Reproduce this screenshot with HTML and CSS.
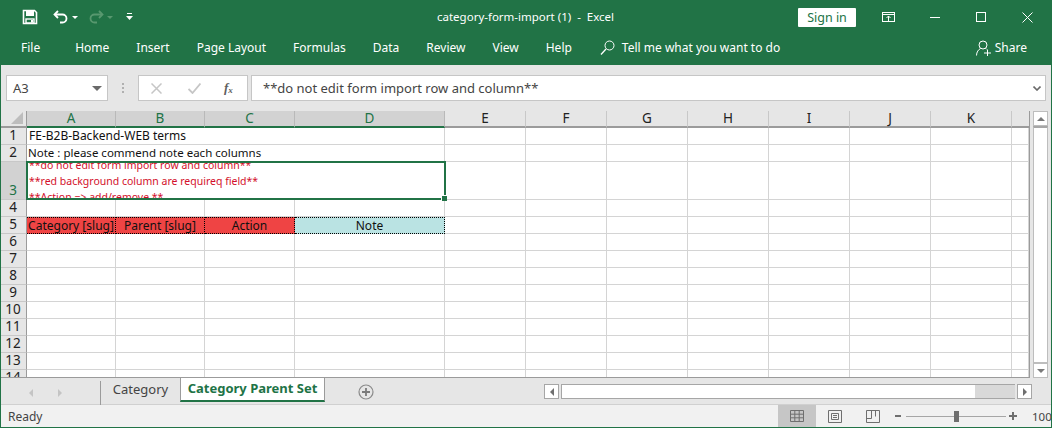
FILE: index.html
```html
<!DOCTYPE html>
<html lang="en">
<head>
<meta charset="utf-8">
<title>category-form-import (1) - Excel</title>
<link rel="stylesheet" href="styles.css">
</head>
<body>
<div class="app">
  <header class="titlebar">
    <div class="qat">
      <svg class="qat-save" width="16" height="16" viewBox="0 0 16 16"><path d="M1.5 1.5h11l2 2v11h-13z" fill="none" stroke="#fff" stroke-width="1.6"/><rect x="4" y="2" width="8" height="5" fill="#fff"/><rect x="4" y="10" width="8" height="4" fill="none" stroke="#fff" stroke-width="1.4"/><rect x="9" y="11" width="2" height="2.5" fill="#fff"/></svg>
      <svg class="qat-undo" width="16" height="14" viewBox="0 0 16 14"><path d="M5 1L1.5 4.5 5 8" fill="none" stroke="#fff" stroke-width="1.8"/><path d="M2 4.5h7.5a4 4 0 0 1 0 8H7" fill="none" stroke="#fff" stroke-width="1.8"/></svg>
      <span class="caret caret-white"></span>
      <svg class="qat-redo" width="16" height="14" viewBox="0 0 16 14"><path d="M11 1l3.500 3.500L11 8" fill="none" stroke="#58986f" stroke-width="1.800"/><path d="M14 4.500H6.500a4 4 0 0 0 0 8H9" fill="none" stroke="#58986f" stroke-width="1.800"/></svg>
      <span class="caret caret-dim"></span>
      <svg class="qat-more" width="7" height="8" viewBox="0 0 7 8"><rect x="1" y="0" width="5" height="1" fill="#fff"/><path d="M0 3h7L3.500 7z" fill="#fff"/></svg>
    </div>
    <div class="doc-title">category-form-import (1)&nbsp; -&nbsp; Excel</div>
    <div class="win">
      <button class="signin">Sign in</button>
      <svg class="win-ribbon" width="13" height="10" viewBox="0 0 13 10"><rect x=".5" y=".5" width="12" height="9" fill="none" stroke="#fff"/><path d="M.5 2.500h12" stroke="#fff"/><path d="M6.500 9V4M4.500 6l2-2 2 2" fill="none" stroke="#fff"/></svg>
      <svg class="win-min" width="10" height="1" viewBox="0 0 10 1"><rect width="10" height="1" fill="#fff"/></svg>
      <svg class="win-max" width="10" height="10" viewBox="0 0 10 10"><rect x=".5" y=".5" width="9" height="9" fill="none" stroke="#fff"/></svg>
      <svg class="win-close" width="11" height="11" viewBox="0 0 11 11"><path d="M.5.500l10 10M10.500.500l-10 10" stroke="#fff" fill="none"/></svg>
    </div>
  </header>
  <nav class="ribbon">
    <span class="rtab rtab-file">File</span>
    <span class="rtab">Home</span>
    <span class="rtab">Insert</span>
    <span class="rtab">Page Layout</span>
    <span class="rtab">Formulas</span>
    <span class="rtab">Data</span>
    <span class="rtab">Review</span>
    <span class="rtab">View</span>
    <span class="rtab">Help</span>
    <span class="tell">
      <svg width="15" height="16" viewBox="0 0 15 16"><circle cx="9.500" cy="5.500" r="4.500" fill="none" stroke="#fff"/><path d="M6 9l-5 5.500" stroke="#fff" stroke-width="1.300"/></svg>
      Tell me what you want to do
    </span>
    <span class="share">
      <svg width="16" height="16" viewBox="0 0 16 16"><circle cx="7" cy="5" r="4" fill="none" stroke="#fff"/><path d="M.5 15.500c0-3.500 2-6 4-7M9.500 8.500l1 .5" fill="none" stroke="#fff"/><path d="M8 13h7M11.500 9.500v7" stroke="#fff"/></svg>
      Share
    </span>
  </nav>
  <section class="fbar">
    <div class="namebox"><span>A3</span><span class="caret caret-gray"></span></div>
    <div class="grip"><i></i><i></i><i></i></div>
    <div class="fbtns">
      <svg width="11" height="11" viewBox="0 0 11 11"><path d="M.5.500l10 10M10.500.500l-10 10" stroke="#c6c6c6" stroke-width="1.500" fill="none"/></svg>
      <svg width="13" height="11" viewBox="0 0 13 11"><path d="M.5 6l4 4L12.500.500" stroke="#c6c6c6" stroke-width="1.800" fill="none"/></svg>
      <span class="fx">f<sub>x</sub></span>
    </div>
    <div class="finput"><span>**do not edit form import row and column**</span>
      <svg width="8" height="5" viewBox="0 0 8 5"><path d="M.5.500L4 4 7.500.500" fill="none" stroke="#6a6a6a" stroke-width="1.600"/></svg>
    </div>
  </section>
  <section class="sheetarea">
    <div class="sheet">
      <div class="grid">
        <div class="corner"><svg width="12" height="12" viewBox="0 0 12 12"><path d="M12 0v12H0z" fill="#bdbdbd"/></svg></div>
        <div class="ch sel">A</div><div class="ch sel">B</div><div class="ch sel">C</div><div class="ch sel">D</div>
        <div class="ch">E</div><div class="ch">F</div><div class="ch">G</div><div class="ch">H</div><div class="ch">I</div><div class="ch">J</div><div class="ch">K</div><div class="ch ch-last"></div>

        <div class="rh">1</div><div class="c span4 t1">FE-B2B-Backend-WEB terms</div><div class="c"></div><div class="c"></div><div class="c"></div><div class="c"></div><div class="c"></div><div class="c"></div><div class="c"></div><div class="c"></div>
        <div class="rh">2</div><div class="c span4 t2">Note : please commend note each columns</div><div class="c"></div><div class="c"></div><div class="c"></div><div class="c"></div><div class="c"></div><div class="c"></div><div class="c"></div><div class="c"></div>
        <div class="rh rh-sel">3</div>
        <div class="c span4 notes"><div class="notes-in"><div>**do not edit form import row and column**</div><div>**red background column are requireq field**</div><div>**Action =&gt; add/remove **</div></div></div>
        <div class="c"></div><div class="c"></div><div class="c"></div><div class="c"></div><div class="c"></div><div class="c"></div><div class="c"></div><div class="c"></div>
        <div class="rh">4</div><div class="c"></div><div class="c"></div><div class="c"></div><div class="c"></div><div class="c"></div><div class="c"></div><div class="c"></div><div class="c"></div><div class="c"></div><div class="c"></div><div class="c"></div><div class="c"></div>
        <div class="rh">5</div><div class="c hd red">Category [slug]</div><div class="c hd red">Parent [slug]</div><div class="c hd red">Action</div><div class="c hd teal">Note</div><div class="c"></div><div class="c"></div><div class="c"></div><div class="c"></div><div class="c"></div><div class="c"></div><div class="c"></div><div class="c"></div>
        <div class="rh">6</div><div class="c"></div><div class="c"></div><div class="c"></div><div class="c"></div><div class="c"></div><div class="c"></div><div class="c"></div><div class="c"></div><div class="c"></div><div class="c"></div><div class="c"></div><div class="c"></div>
        <div class="rh">7</div><div class="c"></div><div class="c"></div><div class="c"></div><div class="c"></div><div class="c"></div><div class="c"></div><div class="c"></div><div class="c"></div><div class="c"></div><div class="c"></div><div class="c"></div><div class="c"></div>
        <div class="rh">8</div><div class="c"></div><div class="c"></div><div class="c"></div><div class="c"></div><div class="c"></div><div class="c"></div><div class="c"></div><div class="c"></div><div class="c"></div><div class="c"></div><div class="c"></div><div class="c"></div>
        <div class="rh">9</div><div class="c"></div><div class="c"></div><div class="c"></div><div class="c"></div><div class="c"></div><div class="c"></div><div class="c"></div><div class="c"></div><div class="c"></div><div class="c"></div><div class="c"></div><div class="c"></div>
        <div class="rh">10</div><div class="c"></div><div class="c"></div><div class="c"></div><div class="c"></div><div class="c"></div><div class="c"></div><div class="c"></div><div class="c"></div><div class="c"></div><div class="c"></div><div class="c"></div><div class="c"></div>
        <div class="rh">11</div><div class="c"></div><div class="c"></div><div class="c"></div><div class="c"></div><div class="c"></div><div class="c"></div><div class="c"></div><div class="c"></div><div class="c"></div><div class="c"></div><div class="c"></div><div class="c"></div>
        <div class="rh">12</div><div class="c"></div><div class="c"></div><div class="c"></div><div class="c"></div><div class="c"></div><div class="c"></div><div class="c"></div><div class="c"></div><div class="c"></div><div class="c"></div><div class="c"></div><div class="c"></div>
        <div class="rh">13</div><div class="c"></div><div class="c"></div><div class="c"></div><div class="c"></div><div class="c"></div><div class="c"></div><div class="c"></div><div class="c"></div><div class="c"></div><div class="c"></div><div class="c"></div><div class="c"></div>
        <div class="rh">14</div><div class="c"></div><div class="c"></div><div class="c"></div><div class="c"></div><div class="c"></div><div class="c"></div><div class="c"></div><div class="c"></div><div class="c"></div><div class="c"></div><div class="c"></div><div class="c"></div>
      </div>
      <div class="selbox"><span class="handle"></span></div>
    </div>
    <div class="vscroll">
      <div class="sbtn"><span class="tri tri-up"></span></div>
      <div class="vtrack"></div>
      <div class="sbtn"><span class="tri tri-down"></span></div>
    </div>
  </section>
  <section class="tabbar">
    <div class="navarrows"><span class="tri tri-left"></span><span class="tri tri-right dim"></span></div>
    <div class="sheets">
      <div class="stab">Category</div>
      <div class="stab active">Category Parent Set</div>
    </div>
    <svg class="addsheet" width="16" height="16" viewBox="0 0 16 16"><circle cx="8" cy="8" r="7" fill="none" stroke="#8a8a8a" stroke-width="1.200"/><path d="M4 8h8M8 4v8" stroke="#7a7a7a" stroke-width="1.800"/></svg>
    <div class="hscroll">
      <div class="hbtn"><span class="tri tri-left dark"></span></div>
      <div class="hthumb"></div>
      <div class="hbtn"><span class="tri tri-right dark"></span></div>
    </div>
  </section>
  <footer class="status">
    <span class="ready">Ready</span>
    <div class="views">
      <div class="view on"><svg width="14" height="12" viewBox="0 0 14 12"><path d="M.5.500h13v11H.5zM.5 4.200h13M.5 7.800h13M4.800.500v11M9.200.500v11" fill="none" stroke="#6f6f6f"/></svg></div>
      <div class="view"><svg width="14" height="13" viewBox="0 0 14 13"><path d="M.5.500h13v12H.5z" fill="none" stroke="#6f6f6f"/><path d="M3.500 3.500h7v6h-7zM5 5.500h4M5 7.500h4" fill="none" stroke="#6f6f6f"/></svg></div>
      <div class="view"><svg width="14" height="13" viewBox="0 0 14 13"><path d="M.5.500h13v12H.5zM.5 8.500h5V.500M9.500.500v6" fill="none" stroke="#6f6f6f"/></svg></div>
    </div>
    <div class="zoomctl">
      <span class="zminus"></span>
      <div class="slider"><span class="knob"></span></div>
      <svg width="8" height="8" viewBox="0 0 8 8"><path d="M0 4h8M4 0v8" stroke="#6f6f6f" stroke-width="2"/></svg>
      <span class="pct">100%</span>
    </div>
  </footer>
</div>
</body>
</html>
```
FILE: styles.css
```css
* { box-sizing: border-box; }
html, body { margin: 0; padding: 0; }
body { width: 1052px; height: 428px; overflow: hidden; font-family: "Noto Sans", "Open Sans", sans-serif; }
.app { width: 1052px; height: 428px; display: flex; flex-direction: column; border: 1px solid #217346; border-top: 0; background: #e6e6e6; overflow: hidden; }

.titlebar { height: 34px; flex: none; background: #217346; color: #fff; display: flex; align-items: center; position: relative; }
.qat { display: flex; align-items: center; padding-left: 21px; }
.qat-save { margin-right: 15px; }
.qat-undo { margin-right: 3px; }
.caret { display: inline-block; width: 0; height: 0; border-left: 3.5px solid transparent; border-right: 3.5px solid transparent; border-top: 3.5px solid #fff; }
.caret-dim { border-top-color: #58986f; margin-right: 13px; }
.caret-white { margin-right: 10px; }
.qat-redo { margin-right: 3px; }
.caret-gray { border-left-width: 5px; border-right-width: 5px; border-top: 5px solid #6a6a6a; }
.doc-title { position: absolute; left: 436px; top: 9px; font-size: 11.500px; line-height: 16px; white-space: nowrap; }
.win { margin-left: auto; display: flex; align-items: center; }
.signin { width: 58px; height: 19px; background: #fff; color: #217346; border: 0; border-radius: 1px; font: 12.500px/19px "Noto Sans", sans-serif; padding: 0; margin-right: 26px; }
.win-ribbon { margin-right: 35px; }
.win-min { margin-right: 36px; }
.win-max { margin-right: 36px; }
.win-close { margin-right: 18px; }

.ribbon { height: 31px; flex: none; background: #217346; color: #fff; display: flex; align-items: center; font-size: 12px; padding-left: 20px; padding-bottom: 4px; gap: 27px; white-space: nowrap; }
.rtab-file { margin-right: 8px; }
.tell { display: flex; align-items: center; gap: 7px; margin-left: 1px; }
.share { display: flex; align-items: center; gap: 3px; margin-left: auto; margin-right: 24px; }

.fbar { height: 46px; flex: none; display: flex; padding: 10px 5px 10px 5px; background: #e6e6e6; }
.namebox { width: 102px; height: 26px; background: #fff; border: 1px solid #c6c6c6; display: flex; align-items: center; justify-content: space-between; padding: 0 5px 0 6px; font-size: 13px; color: #444; }
.grip { width: 30px; display: flex; flex-direction: column; align-items: center; justify-content: center; gap: 2px; }
.grip i { display: block; width: 2px; height: 2px; background: #b0b0b0; }
.fbtns { width: 110px; height: 26px; background: #fff; border: 1px solid #c6c6c6; display: flex; align-items: center; padding-left: 12px; }
.fbtns svg:first-child { margin-right: 26px; }
.fx { margin-left: 23px; font: italic bold 13px/1 "Liberation Serif", serif; color: #5f5f5f; }
.fx sub { font-size: 9px; vertical-align: -1px; }
.finput { width: 795px; height: 26px; margin-left: 3px; background: #fff; border: 1px solid #c6c6c6; display: flex; align-items: center; justify-content: space-between; padding: 0 4px 0 11px; font-size: 13px; color: #444; }

.sheetarea { height: 267px; flex: none; display: flex; }
.sheet { width: 1029px; height: 267px; position: relative; overflow: hidden; border-bottom: 1px solid #9b9b9b; border-right: 1px solid #9b9b9b; }
.grid { display: grid; grid-template-columns: 26px 89px 89px 90px 150px repeat(7, 81px) 17px; grid-template-rows: 17px 17px 17px 38px 17px 17px repeat(9, 17px); background: #fff; font-size: 12px; line-height: 16px; color: #111; }
.corner { background: #e6e6e6; border-right: 1px solid #9b9b9b; border-bottom: 2px solid #9b9b9b; display: flex; align-items: flex-end; justify-content: flex-end; padding: 0 3px 2px 0; }
.ch { background: #e6e6e6; border-right: 1px solid #c8c8c8; border-bottom: 2px solid #9b9b9b; text-align: center; font-size: 13.500px; line-height: 15px; color: #222; }
.ch.sel { background: #d2d2d2; color: #217346; border-bottom-color: #217346; border-right-color: #b9b9b9; }
.ch-last { border-right: 0; }
.rh { background: #e6e6e6; border-right: 1px solid #9b9b9b; border-bottom: 1px solid #c8c8c8; text-align: center; font-size: 13.500px; line-height: 17px; color: #222; display: flex; align-items: flex-end; justify-content: center; padding-right: 1px; }
.rh-sel { background: #d2d2d2; color: #217346; }
.c { border-right: 1px solid #d4d4d4; border-bottom: 1px solid #d4d4d4; min-width: 0; overflow: hidden; white-space: nowrap; }
.span4 { grid-column: span 4; border-right-color: #d4d4d4; }
.t1 { padding-left: 2px; font-size: 12px; }
.t2 { padding-left: 1px; font-size: 11.500px; }
.notes { display: flex; align-items: center; padding-left: 2px; color: #d3102b; font-size: 10.500px; line-height: 16px; }
.notes-in { flex: none; }
.hd { text-align: center; border: 1px dotted #000; border-left: 0; border-top: 1px dotted #000; font-size: 12px; line-height: 15px; }
.red { background: #ef4444; }
.teal { background: #bae3e3; }

.selbox { position: absolute; left: 25px; top: 50px; width: 420px; height: 39px; border: 2px solid #217346; pointer-events: none; }
.handle { position: absolute; right: -3px; bottom: -3px; width: 6px; height: 6px; background: #217346; border: 1px solid #fff; border-width: 1px 0 0 1px; }

.vscroll { width: 21px; padding-left: 3px; padding-right: 3px; display: flex; flex-direction: column; }
.sbtn { height: 15px; flex: none; background: #fff; border: 1px solid #bdbdbd; display: flex; align-items: center; justify-content: center; }
.vtrack { flex: 1; background: #fff; border: 1px solid #bdbdbd; border-top: 2px solid #a6a6a6; }
.tri { display: inline-block; width: 0; height: 0; border: 4px solid transparent; }
.tri-up { border-top: 0; border-bottom: 4px solid #7a7a7a; }
.tri-down { border-bottom: 0; border-top: 4px solid #7a7a7a; }
.tri-left { border-left: 0; border-right: 4px solid #c4c4c4; }
.tri-right { border-right: 0; border-left: 4px solid #c4c4c4; }
.tri.dark.tri-left { border-right-color: #6f6f6f; }
.tri.dark.tri-right { border-left-color: #6f6f6f; }

.tabbar { height: 27px; flex: none; display: flex; background: #e6e6e6; border-bottom: 1px solid #d0d0d0; }
.navarrows { width: 100px; height: 24px; display: flex; align-items: center; gap: 25px; padding-left: 28px; border-right: 1px solid #9b9b9b; margin-top: 3px; }
.sheets { display: flex; height: 24px; font-size: 13px; }
.stab { display: flex; align-items: center; justify-content: center; width: 79px; color: #444; padding-bottom: 2px; }
.stab.active { width: 145px; height: 24px; background: #fff; color: #217346; font-weight: 700; border: 1px solid #9b9b9b; border-top: 0; border-bottom: 2px solid #217346; position: relative; }
.addsheet { margin: 6px 0 0 33px; }
.hscroll { display: flex; width: 488px; height: 15px; margin: 6px 0 0 170px; }
.hbtn { width: 15px; flex: none; background: #fff; border: 1px solid #a6a6a6; display: flex; align-items: center; justify-content: center; }
.hthumb { flex: 1; margin: 0 2px; background: linear-gradient(to right, #fff 413px, #d9d9d9 413px); border: 1px solid #a6a6a6; border-right: 0; }

.status { flex: 1; min-height: 0; display: flex; align-items: center; background: #f1f1f1; font-size: 12px; color: #444; position: relative; }
.ready { margin-left: 7px; }
.views { display: flex; margin-left: auto; align-self: stretch; }
.view { width: 38px; display: flex; align-items: center; justify-content: center; }
.view.on { background: #c6c6c6; }
.zoomctl { display: flex; align-items: center; margin-left: 3px; margin-right: 19px; }
.zminus { width: 6px; height: 2px; background: #6f6f6f; margin-right: 5px; }
.slider { width: 100px; height: 1px; background: #a6a6a6; position: relative; margin-right: 3px; }
.knob { position: absolute; left: 48px; top: -5px; width: 5px; height: 11px; background: #6f6f6f; }
.pct { margin-left: 15px; font-size: 11.500px; width: 0; white-space: nowrap; }
```
